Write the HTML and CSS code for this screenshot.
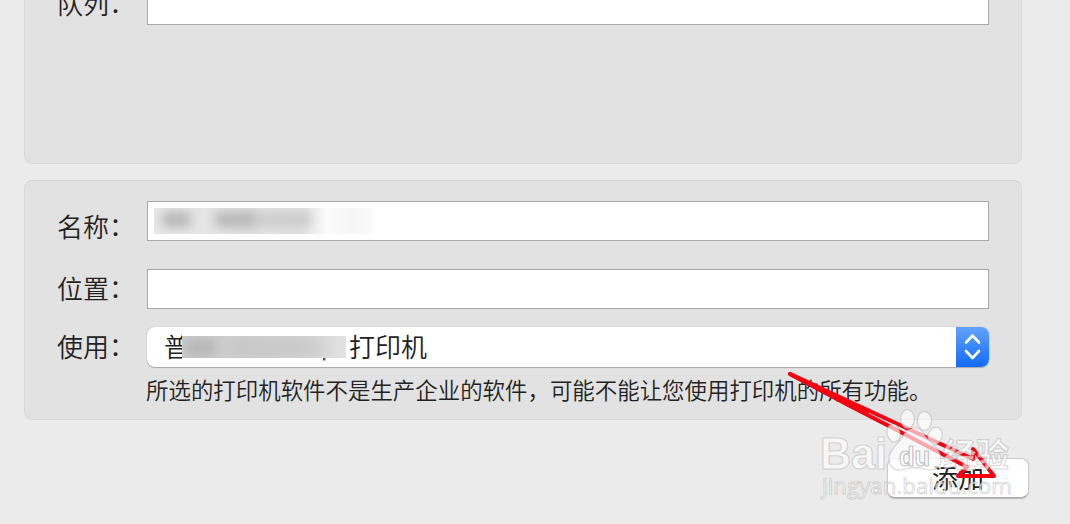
FILE: index.html
```html
<!DOCTYPE html>
<html lang="zh-CN">
<head>
<meta charset="utf-8">
<title>添加打印机</title>
<link rel="stylesheet" href="styles.css">
</head>
<body>
<main class="dialog">
  <section class="panel panel-top">
    <div class="row">
      <span class="label">队列<span class="colon">：</span></span>
      <div class="field"></div>
    </div>
  </section>
  <section class="panel panel-main">
    <div class="row row-name">
      <span class="label label-name">名称<span class="colon">：</span></span>
      <div class="field"><div class="redacted redacted-name"><i class="smudge s1"></i><i class="smudge s2"></i><i class="smudge s3"></i></div></div>
    </div>
    <div class="row row-location">
      <span class="label">位置<span class="colon">：</span></span>
      <div class="field"></div>
    </div>
    <div class="row row-use">
      <span class="label">使用<span class="colon">：</span></span>
      <div class="select">
        <div class="value"><span class="first">普</span><div class="redacted redacted-use"><i class="smudge u1"></i><i class="smudge u2"></i></div><span>打印机</span></div>
        <div class="stepper">
          <svg width="33" height="40" viewBox="0 0 33 40"><path d="M10 15.500l6.500-7 6.500 7M10 24l6.500 7 6.500-7" fill="none" stroke="#fff" stroke-width="2.600" stroke-linecap="round" stroke-linejoin="round"/></svg>
        </div>
      </div>
    </div>
    <p class="note">所选的打印机软件不是生产企业的软件，可能不能让您使用打印机的所有功能。</p>
  </section>
  <footer class="actions"><button class="add">添加</button></footer>
</main>
<svg class="overlay" width="1070" height="524" viewBox="0 0 1070 524">
  <path d="M323 358h2.500v2.500h-2.500z" fill="#555"/>
  <g stroke="#f50010" stroke-width="4" stroke-linecap="round" stroke-linejoin="round">
    <path fill="none" d="M790 374L973 459L973 449L994 476L958 476L967 467L889 426L850 406Z"/>
    <path d="M790 374L868 411L864 412L832 396Z" fill="#f50010"/>
  </g>
  <g class="mark">
    <text x="820" y="469" class="brand" textLength="67" lengthAdjust="spacingAndGlyphs">Bai</text>
    <ellipse cx="907.500" cy="419" rx="6.800" ry="9.500"/>
    <ellipse cx="924.500" cy="421" rx="7" ry="9.500"/>
    <ellipse cx="893.500" cy="433" rx="6.500" ry="9" transform="rotate(-12 893.500 433)"/>
    <ellipse cx="935" cy="436" rx="7" ry="9" transform="rotate(18 935 436)"/>
    <path d="M904 434C909 426 920 426 924 434C928 442 940 447 941 458C942 468 934 472 924 469C918 467 912 467 905 469C896 472 889 468 889 459C889 448 900 444 904 434Z"/>
    <text x="899" y="466" class="du" textLength="31" lengthAdjust="spacingAndGlyphs">du</text>
    <text x="943" y="467" class="cn" textLength="66" lengthAdjust="spacingAndGlyphs">经验</text>
    <text x="822" y="494" class="site" textLength="190" lengthAdjust="spacingAndGlyphs">jingyan.baidu.com</text>
  </g>
</svg>
</body>
</html>
```
FILE: styles.css
```css
* { box-sizing: border-box; }
body {
  margin: 0;
  background: #ebebeb;
  color: #222;
  font-family: "Noto Sans CJK SC", sans-serif;
  font-weight: 350;
  overflow: hidden;
}
.dialog {
  width: 1070px;
  height: 524px;
  padding: 0 48px 0 24px;
  display: flex;
  flex-direction: column;
}
.panel {
  background: #e2e2e2;
  border: 1px solid #dadada;
  padding-left: 32px;
}
.panel-top {
  height: 164px;
  border-top: 0;
  border-radius: 0 0 8px 8px;
}
.panel-top .row { margin-top: -15px; }
.panel-top .label { padding-bottom: 4px; }
.panel-main {
  height: 240px;
  margin-top: 16px;
  padding-top: 20px;
  border-radius: 8px;
  border-top-color: #d2d2d2;
}
.row {
  display: flex;
  height: 40px;
  align-items: center;
}
.row-location { margin-top: 28px; }
.row-use { margin-top: 18px; }
.label {
  width: 90px;
  padding-bottom: 2px;
  font-size: 26px;
  line-height: 40px;
  white-space: nowrap;
}
.label-name { padding: 9px 0 0; }
.colon { position: relative; top: -1px; }
.field {
  width: 842px;
  height: 40px;
  border: 1px solid #a8a8a8;
  background: #fff;
  padding: 6px;
}
.redacted {
  position: relative;
  overflow: hidden;
}
.redacted-name {
  width: 218px;
  height: 26px;
  background: linear-gradient(90deg, #e9e9e9 0, #e2e2e2 68%, #fbfbfb 79%, #f5f5f5 92%, #fafafa 100%);
}
.smudge {
  position: absolute;
  top: 4px;
  height: 15px;
  background: #b4b4b4;
  filter: blur(6px);
}
.s1 { left: 8px; width: 29px; }
.s2 { left: 61px; width: 38px; }
.s3 { left: 90px; width: 68px; opacity: .5; }
.select {
  width: 842px;
  height: 40px;
  display: flex;
  justify-content: space-between;
  background: #fff;
  border-radius: 8px;
  overflow: hidden;
  box-shadow: 0 0 1px #999, 0 1px 1px #aaa;
}
.value {
  display: flex;
  align-items: center;
  padding-left: 17px;
  font-size: 26px;
  line-height: 38px;
  height: 38px;
}
.first { width: 18px; overflow: hidden; }
.redacted-use {
  width: 164px;
  height: 22px;
  margin: 2px 3px 0 0;
  background: linear-gradient(90deg, #ccc, #d2d2d2 70%, #e2e2e2);
}
.u1 { left: 4px; width: 30px; }
.u2 { left: 48px; width: 94px; opacity: .3; }
.stepper {
  width: 33px;
  height: 40px;
  background: linear-gradient(#62a4fb, #126af9);
}
.stepper svg { display: block; }
.note {
  margin: 6px 0 0 89px;
  font-size: 22.45px;
  line-height: 32px;
  white-space: nowrap;
}
.actions {
  display: flex;
  justify-content: flex-end;
  margin: 38px -7px 0 0;
}
.add {
  width: 142px;
  height: 40px;
  border: 1px solid #ccc;
  border-bottom-color: #aaa;
  border-radius: 8px;
  background: #fff;
  color: #222;
  font: 400 26px/36px "Noto Sans CJK SC", sans-serif;
  padding: 0 0 2px;
  box-shadow: 0 1px 1px #bbb;
}
.overlay { position: absolute; left: 0; top: 0; }
.mark {
  fill: rgba(255, 255, 255, .65);
  stroke: rgba(160, 160, 160, .4);
  stroke-width: 1.2;
}
.brand { font: 700 44px "Liberation Sans", sans-serif; }
.du { font: 700 27px "Liberation Sans", sans-serif; stroke: rgba(150, 150, 150, .6); }
.cn { font: 700 33px "Noto Sans CJK SC", sans-serif; }
.site { font: 400 22px "Open Sans", sans-serif; stroke-width: 1; }
```
